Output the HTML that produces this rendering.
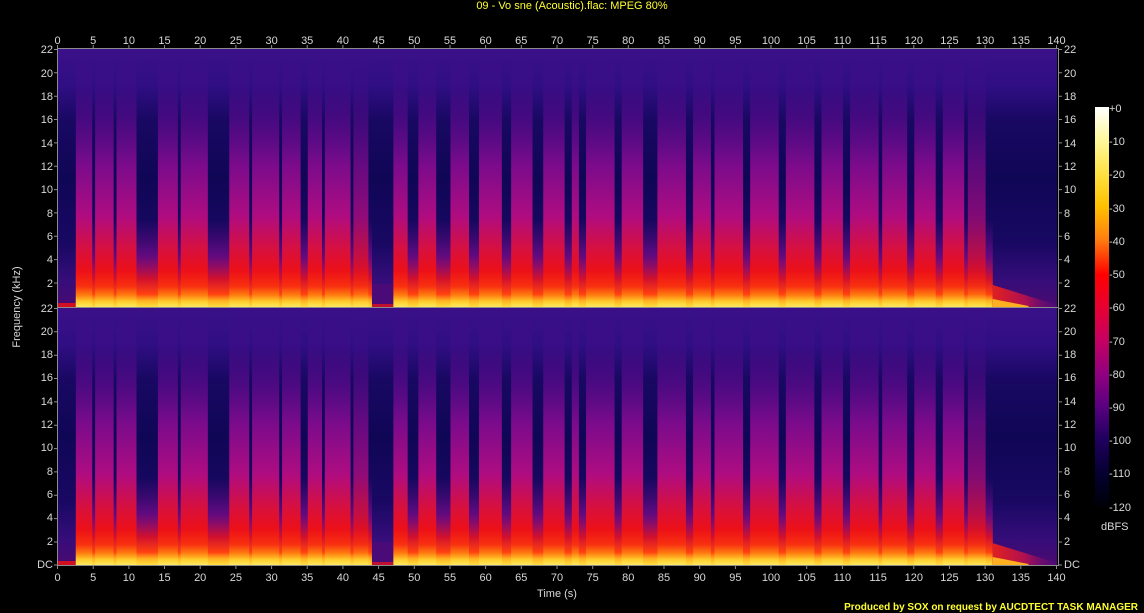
<!DOCTYPE html>
<html><head><meta charset="utf-8"><style>
html,body{margin:0;padding:0;background:#000;width:1144px;height:613px;overflow:hidden}
svg{display:block}
text{font-family:"Liberation Sans",sans-serif;font-size:11px;fill:#d8d8d8}
</style></head><body>
<svg width="1144" height="613" viewBox="0 0 1144 613" xmlns="http://www.w3.org/2000/svg">
<defs>
<linearGradient id="base" gradientUnits="userSpaceOnUse" x1="0" y1="0" x2="0" y2="258">
<stop offset="0" stop-color="#3a1088"/><stop offset="0.14" stop-color="#300e84"/>
<stop offset="0.28" stop-color="#180862"/><stop offset="0.5" stop-color="#100656"/>
<stop offset="0.75" stop-color="#180862"/><stop offset="0.9" stop-color="#360d7a"/>
<stop offset="1" stop-color="#4a0a70"/></linearGradient>
<linearGradient id="burst" gradientUnits="userSpaceOnUse" x1="0" y1="0" x2="0" y2="258">
<stop offset="0" stop-color="#6e0a96" stop-opacity="0"/>
<stop offset="0.15" stop-color="#6e0a96" stop-opacity="0.15"/>
<stop offset="0.27" stop-color="#6a0c98" stop-opacity="0.55"/>
<stop offset="0.45" stop-color="#8e0c94" stop-opacity="0.85"/>
<stop offset="0.65" stop-color="#b00c80"/>
<stop offset="0.78" stop-color="#d8103c"/>
<stop offset="0.86" stop-color="#ec1018"/>
<stop offset="0.92" stop-color="#f83010"/>
<stop offset="0.955" stop-color="#ff8010"/>
<stop offset="0.98" stop-color="#ffd030"/>
<stop offset="1" stop-color="#ffe860"/></linearGradient>
<linearGradient id="low" gradientUnits="userSpaceOnUse" x1="0" y1="0" x2="0" y2="258">
<stop offset="0.66" stop-color="#7a0a90" stop-opacity="0"/>
<stop offset="0.8" stop-color="#8a0a8c" stop-opacity="0.6"/>
<stop offset="0.89" stop-color="#d0102e"/>
<stop offset="0.95" stop-color="#ff4010"/>
<stop offset="0.975" stop-color="#ffb020"/>
<stop offset="1" stop-color="#ffe040"/></linearGradient>
<linearGradient id="tail" x1="0" y1="0" x2="1" y2="0">
<stop offset="0" stop-color="#e02020"/><stop offset="0.5" stop-color="#b01050"/>
<stop offset="1" stop-color="#5a0a80" stop-opacity="0.3"/></linearGradient>
<linearGradient id="cbar" x1="0" y1="0" x2="0" y2="1">
<stop offset="0" stop-color="#ffffff"/><stop offset="0.08" stop-color="#fff8a0"/>
<stop offset="0.17" stop-color="#ffe040"/><stop offset="0.25" stop-color="#ffc000"/>
<stop offset="0.33" stop-color="#ff8010"/><stop offset="0.42" stop-color="#ff0000"/>
<stop offset="0.5" stop-color="#e80030"/><stop offset="0.58" stop-color="#c80060"/>
<stop offset="0.67" stop-color="#900080"/><stop offset="0.75" stop-color="#5a0080"/>
<stop offset="0.83" stop-color="#200060"/><stop offset="0.92" stop-color="#050030"/>
<stop offset="1" stop-color="#000008"/></linearGradient>
<symbol id="spec" viewBox="0 0 140 258" preserveAspectRatio="none">
<rect x="0" y="0" width="140" height="258" fill="url(#base)"/>
<rect x="0" y="254" width="2.5" height="4" fill="#d01020"/>
<rect x="2.5" y="0" width="41.5" height="258" fill="url(#low)"/>
<rect x="47" y="0" width="84" height="258" fill="url(#low)"/>
<rect x="44" y="235" width="3" height="23" fill="#4a0a78"/>
<rect x="44" y="255" width="3" height="3" fill="#c01030"/>
<g fill="url(#burst)">
<rect x="2.5" width="2.3" height="258"/><rect x="5.2" width="2.6" height="258"/>
<rect x="8.2" width="2.8" height="258"/><rect x="14" width="2.8" height="258"/>
<rect x="17.2" width="3.8" height="258"/><rect x="24" width="2.8" height="258"/>
<rect x="27.2" width="3.8" height="258"/><rect x="31.4" width="2.6" height="258"/>
<rect x="35" width="2" height="258"/><rect x="37.4" width="3.6" height="258"/>
<rect x="41.4" width="2.1" height="258" opacity="0.8"/><rect x="47" width="2" height="258"/>
<rect x="50.5" width="2.5" height="258"/><rect x="55" width="2.6" height="258"/>
<rect x="59" width="3.2" height="258"/><rect x="63.5" width="3" height="258"/>
<rect x="68" width="3" height="258"/><rect x="72" width="1" height="258"/>
<rect x="74" width="4" height="258"/><rect x="79" width="3" height="258"/>
<rect x="84" width="4" height="258"/><rect x="89" width="2.5" height="258"/>
<rect x="92" width="4" height="258"/><rect x="97" width="4" height="258"/>
<rect x="102" width="4" height="258"/><rect x="107" width="3" height="258"/>
<rect x="111" width="4" height="258"/><rect x="115.5" width="3.5" height="258"/>
<rect x="120" width="3" height="258"/><rect x="124" width="3" height="258"/>
<rect x="127.5" width="2.5" height="258" opacity="0.7"/>
</g>
<polygon points="131,236 140,256 140,258 131,258" fill="url(#tail)"/>
<polygon points="131,250 136,257 136,258 131,258" fill="#ffb020"/>
</symbol>
</defs>

<text x="572" y="9" text-anchor="middle" style="fill:#ffff30">09 - Vo sne (Acoustic).flac: MPEG 80%</text>

<use href="#spec" x="58" y="49" width="999" height="258"/>
<use href="#spec" x="58" y="308" width="999" height="257"/>
<rect x="57.5" y="48.5" width="1001" height="517" fill="none" stroke="#8c8c8c"/>
<line x1="57" y1="307.5" x2="1059" y2="307.5" stroke="#8c8c8c"/>

<g stroke="#8c8c8c">
<line x1="57.5" y1="45" x2="57.5" y2="48"/><line x1="93.2" y1="45" x2="93.2" y2="48"/><line x1="128.9" y1="45" x2="128.9" y2="48"/><line x1="164.5" y1="45" x2="164.5" y2="48"/><line x1="200.2" y1="45" x2="200.2" y2="48"/><line x1="235.9" y1="45" x2="235.9" y2="48"/><line x1="271.6" y1="45" x2="271.6" y2="48"/><line x1="307.2" y1="45" x2="307.2" y2="48"/><line x1="342.9" y1="45" x2="342.9" y2="48"/><line x1="378.6" y1="45" x2="378.6" y2="48"/><line x1="414.3" y1="45" x2="414.3" y2="48"/><line x1="450" y1="45" x2="450" y2="48"/><line x1="485.6" y1="45" x2="485.6" y2="48"/><line x1="521.3" y1="45" x2="521.3" y2="48"/><line x1="557" y1="45" x2="557" y2="48"/><line x1="592.7" y1="45" x2="592.7" y2="48"/><line x1="628.3" y1="45" x2="628.3" y2="48"/><line x1="664" y1="45" x2="664" y2="48"/><line x1="699.7" y1="45" x2="699.7" y2="48"/><line x1="735.4" y1="45" x2="735.4" y2="48"/><line x1="771" y1="45" x2="771" y2="48"/><line x1="806.7" y1="45" x2="806.7" y2="48"/><line x1="842.4" y1="45" x2="842.4" y2="48"/><line x1="878.1" y1="45" x2="878.1" y2="48"/><line x1="913.8" y1="45" x2="913.8" y2="48"/><line x1="949.4" y1="45" x2="949.4" y2="48"/><line x1="985.1" y1="45" x2="985.1" y2="48"/><line x1="1020.8" y1="45" x2="1020.8" y2="48"/><line x1="1056.5" y1="45" x2="1056.5" y2="48"/>
</g>
<g text-anchor="middle">
<text x="57.5" y="44">0</text><text x="93.2" y="44">5</text><text x="128.9" y="44">10</text><text x="164.5" y="44">15</text><text x="200.2" y="44">20</text><text x="235.9" y="44">25</text><text x="271.6" y="44">30</text><text x="307.2" y="44">35</text><text x="342.9" y="44">40</text><text x="378.6" y="44">45</text><text x="414.3" y="44">50</text><text x="450" y="44">55</text><text x="485.6" y="44">60</text><text x="521.3" y="44">65</text><text x="557" y="44">70</text><text x="592.7" y="44">75</text><text x="628.3" y="44">80</text><text x="664" y="44">85</text><text x="699.7" y="44">90</text><text x="735.4" y="44">95</text><text x="771" y="44">100</text><text x="806.7" y="44">105</text><text x="842.4" y="44">110</text><text x="878.1" y="44">115</text><text x="913.8" y="44">120</text><text x="949.4" y="44">125</text><text x="985.1" y="44">130</text><text x="1020.8" y="44">135</text><text x="1056.5" y="44">140</text>
</g>
<g text-anchor="middle">
<text x="57.5" y="581">0</text><text x="93.2" y="581">5</text><text x="128.9" y="581">10</text><text x="164.5" y="581">15</text><text x="200.2" y="581">20</text><text x="235.9" y="581">25</text><text x="271.6" y="581">30</text><text x="307.2" y="581">35</text><text x="342.9" y="581">40</text><text x="378.6" y="581">45</text><text x="414.3" y="581">50</text><text x="450" y="581">55</text><text x="485.6" y="581">60</text><text x="521.3" y="581">65</text><text x="557" y="581">70</text><text x="592.7" y="581">75</text><text x="628.3" y="581">80</text><text x="664" y="581">85</text><text x="699.7" y="581">90</text><text x="735.4" y="581">95</text><text x="771" y="581">100</text><text x="806.7" y="581">105</text><text x="842.4" y="581">110</text><text x="878.1" y="581">115</text><text x="913.8" y="581">120</text><text x="949.4" y="581">125</text><text x="985.1" y="581">130</text><text x="1020.8" y="581">135</text><text x="1056.5" y="581">140</text>
</g>
<g stroke="#8c8c8c">
<line x1="57.5" y1="566" x2="57.5" y2="569"/><line x1="93.2" y1="566" x2="93.2" y2="569"/><line x1="128.9" y1="566" x2="128.9" y2="569"/><line x1="164.5" y1="566" x2="164.5" y2="569"/><line x1="200.2" y1="566" x2="200.2" y2="569"/><line x1="235.9" y1="566" x2="235.9" y2="569"/><line x1="271.6" y1="566" x2="271.6" y2="569"/><line x1="307.2" y1="566" x2="307.2" y2="569"/><line x1="342.9" y1="566" x2="342.9" y2="569"/><line x1="378.6" y1="566" x2="378.6" y2="569"/><line x1="414.3" y1="566" x2="414.3" y2="569"/><line x1="450" y1="566" x2="450" y2="569"/><line x1="485.6" y1="566" x2="485.6" y2="569"/><line x1="521.3" y1="566" x2="521.3" y2="569"/><line x1="557" y1="566" x2="557" y2="569"/><line x1="592.7" y1="566" x2="592.7" y2="569"/><line x1="628.3" y1="566" x2="628.3" y2="569"/><line x1="664" y1="566" x2="664" y2="569"/><line x1="699.7" y1="566" x2="699.7" y2="569"/><line x1="735.4" y1="566" x2="735.4" y2="569"/><line x1="771" y1="566" x2="771" y2="569"/><line x1="806.7" y1="566" x2="806.7" y2="569"/><line x1="842.4" y1="566" x2="842.4" y2="569"/><line x1="878.1" y1="566" x2="878.1" y2="569"/><line x1="913.8" y1="566" x2="913.8" y2="569"/><line x1="949.4" y1="566" x2="949.4" y2="569"/><line x1="985.1" y1="566" x2="985.1" y2="569"/><line x1="1020.8" y1="566" x2="1020.8" y2="569"/><line x1="1056.5" y1="566" x2="1056.5" y2="569"/>
</g>

<g text-anchor="end">
<text x="53" y="53">22</text><text x="53" y="77">20</text><text x="53" y="100">18</text><text x="53" y="123">16</text><text x="53" y="147">14</text><text x="53" y="170">12</text><text x="53" y="193">10</text><text x="53" y="217">8</text><text x="53" y="240">6</text><text x="53" y="263">4</text><text x="53" y="287">2</text>
<text x="53" y="312">22</text><text x="53" y="335">20</text><text x="53" y="358">18</text><text x="53" y="381">16</text><text x="53" y="405">14</text><text x="53" y="428">12</text><text x="53" y="451">10</text><text x="53" y="475">8</text><text x="53" y="498">6</text><text x="53" y="521">4</text><text x="53" y="545">2</text><text x="53" y="568">DC</text>
</g>
<g>
<text x="1064" y="53">22</text><text x="1064" y="77">20</text><text x="1064" y="100">18</text><text x="1064" y="123">16</text><text x="1064" y="147">14</text><text x="1064" y="170">12</text><text x="1064" y="193">10</text><text x="1064" y="217">8</text><text x="1064" y="240">6</text><text x="1064" y="263">4</text><text x="1064" y="287">2</text>
<text x="1064" y="312">22</text><text x="1064" y="335">20</text><text x="1064" y="358">18</text><text x="1064" y="381">16</text><text x="1064" y="405">14</text><text x="1064" y="428">12</text><text x="1064" y="451">10</text><text x="1064" y="475">8</text><text x="1064" y="498">6</text><text x="1064" y="521">4</text><text x="1064" y="545">2</text><text x="1064" y="568">DC</text>
</g>
<g stroke="#8c8c8c">
<path d="M54 49.5h3M54 72.8h3M54 96.2h3M54 119.5h3M54 142.9h3M54 166.2h3M54 189.6h3M54 212.9h3M54 236.3h3M54 259.6h3M54 283h3M54 308.5h3M54 331.8h3M54 355.2h3M54 378.5h3M54 401.9h3M54 425.2h3M54 448.6h3M54 471.9h3M54 495.3h3M54 518.6h3M54 542h3M54 565h3"/>
<path d="M1059 49.5h3M1059 72.8h3M1059 96.2h3M1059 119.5h3M1059 142.9h3M1059 166.2h3M1059 189.6h3M1059 212.9h3M1059 236.3h3M1059 259.6h3M1059 283h3M1059 308.5h3M1059 331.8h3M1059 355.2h3M1059 378.5h3M1059 401.9h3M1059 425.2h3M1059 448.6h3M1059 471.9h3M1059 495.3h3M1059 518.6h3M1059 542h3M1059 565h3"/>
</g>

<text x="557" y="597" text-anchor="middle">Time (s)</text>
<text transform="translate(20,307) rotate(-90)" text-anchor="middle">Frequency (kHz)</text>

<rect x="1095" y="107" width="14" height="399" fill="url(#cbar)"/>
<g>
<text x="1109" y="112">+0</text><text x="1109" y="145">-10</text><text x="1109" y="178">-20</text><text x="1109" y="212">-30</text><text x="1109" y="245">-40</text><text x="1109" y="278">-50</text><text x="1109" y="311">-60</text><text x="1109" y="345">-70</text><text x="1109" y="378">-80</text><text x="1109" y="411">-90</text><text x="1109" y="444">-100</text><text x="1109" y="477">-110</text><text x="1109" y="511">-120</text>
<text x="1101" y="530">dBFS</text>
</g>

<text x="1138" y="610" text-anchor="end" style="fill:#ffff30;font-weight:bold;font-size:10px">Produced by SOX on request by AUCDTECT TASK MANAGER</text>
</svg>
</body></html>
